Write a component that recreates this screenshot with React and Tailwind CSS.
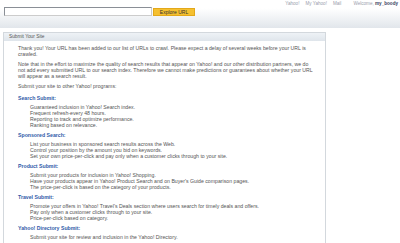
import React from 'react';

const programs = [
  {
    title: 'Search Submit:',
    items: [
      'Guaranteed inclusion in Yahoo! Search index.',
      'Frequent refresh-every 48 hours.',
      'Reporting to track and optimize performance.',
      'Ranking based on relevance.',
    ],
  },
  {
    title: 'Sponsored Search:',
    items: [
      'List your business in sponsored search results across the Web.',
      'Control your position by the amount you bid on keywords.',
      'Set your own price-per-click and pay only when a customer clicks through to your site.',
    ],
  },
  {
    title: 'Product Submit:',
    items: [
      'Submit your products for inclusion in Yahoo! Shopping.',
      "Have your products appear in Yahoo! Product Search and on Buyer's Guide comparison pages.",
      'The price-per-click is based on the category of your products.',
    ],
  },
  {
    title: 'Travel Submit:',
    items: [
      "Promote your offers in Yahoo! Travel's Deals section where users search for timely deals and offers.",
      'Pay only when a customer clicks through to your site.',
      'Price-per-click based on category.',
    ],
  },
  {
    title: 'Yahoo! Directory Submit:',
    items: ['Submit your site for review and inclusion in the Yahoo! Directory.'],
  },
];

export default function App() {
  return (
    <div className="w-[400px] h-[243px] overflow-hidden bg-white text-[5.2px] leading-[6px] text-[#555] font-['Liberation_Sans',Arial,sans-serif]">
      {/* top bar */}
      <div className="h-[28px] bg-gradient-to-b from-white from-30% to-[#e1e6eb] relative">
        <div className="absolute top-[1px] right-[2px] flex gap-[6px] text-[4.6px] text-[#9aa0ad]">
          <span>Yahoo!</span>
          <span>My Yahoo!</span>
          <span>Mail</span>
          <span className="ml-[6px]">
            Welcome, <b className="text-[#3a4260]">my_boody</b>
          </span>
        </div>
        <div className="flex items-center pt-[7px] pl-[4px]">
          <div className="w-[148px] h-[9px] bg-white border border-[#8a8f96] border-r-[#ccc] border-b-[#ccc]" />
          <div className="ml-[1px] w-[42px] h-[8px] mt-[1px] bg-[#f5c030] border border-[#e3a81a] flex items-center justify-center text-[5px] text-[#333]">
            Explore URL
          </div>
        </div>
      </div>

      {/* panel */}
      <div className="mt-[4px] ml-[3px] w-[323px] h-[220px] border-l border-r border-t border-[#d3d8dd]">
        <div className="h-[8px] bg-gradient-to-b from-[#eef2f6] to-[#dfe5eb] pl-[5px] flex items-center text-[4.8px] text-[#555]">
          Submit Your Site
        </div>
        <div className="pl-[14px] pr-[10px] pt-[4px]">
          <p className="mb-[4px]">
            Thank you! Your URL has been added to our list of URLs to crawl. Please expect a delay of several weeks before your URL is crawled.
          </p>
          <p className="mb-[4px]">
            Note that in the effort to maximize the quality of search results that appear on Yahoo! and our other distribution partners, we do not add every submitted URL to our search index. Therefore we cannot make predictions or guarantees about whether your URL will appear as a search result.
          </p>
          <p className="mb-[6px]">Submit your site to other Yahoo! programs:</p>
          {programs.map((p) => (
            <div key={p.title} className="mb-[4px]">
              <div className="font-bold text-[#2f5aa8] mb-[3px]">{p.title}</div>
              <div className="pl-[12px]">
                {p.items.map((it) => (
                  <div key={it}>{it}</div>
                ))}
              </div>
            </div>
          ))}
        </div>
      </div>
    </div>
  );
}
